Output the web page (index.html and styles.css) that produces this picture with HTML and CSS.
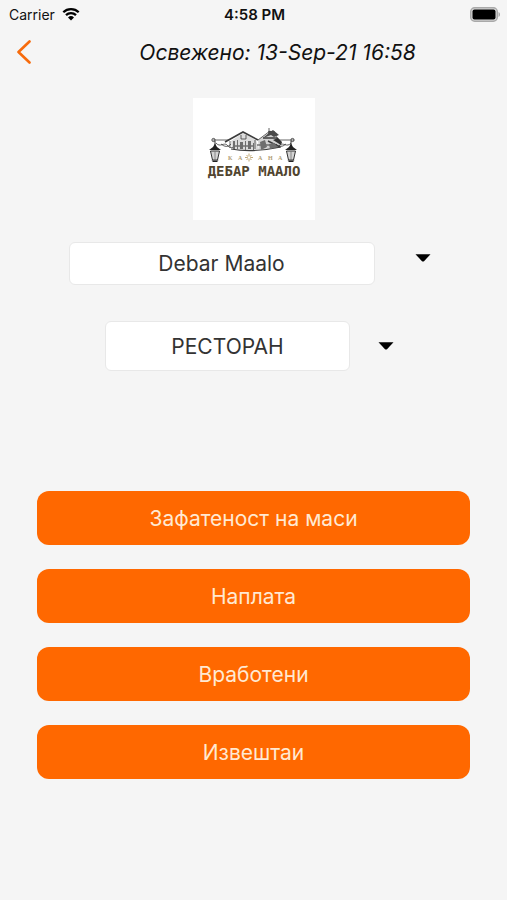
FILE: index.html
```html
<!DOCTYPE html>
<html lang="mk">
<head>
<meta charset="utf-8">
<meta name="viewport" content="width=device-width, initial-scale=1">
<title>Debar Maalo</title>
<link rel="stylesheet" href="styles.css">
</head>
<body>
<div class="status">
  <div class="carrier">
    <span>Carrier</span>
    <svg class="wifi" viewBox="0 0 18 14" aria-hidden="true">
      <path d="M1.3 5.2a11 11 0 0 1 15.4 0M4 8.2a7.2 7.2 0 0 1 10 0" fill="none" stroke="#000" stroke-width="2.3"/>
      <path d="M9 13.6 6 10.5a4.3 4.3 0 0 1 6 0z"/>
    </svg>
  </div>
  <time class="clock">4:58 PM</time>
  <svg class="battery" viewBox="0 0 30 15" aria-hidden="true">
    <rect x=".7" y=".7" width="26.6" height="13.6" rx="4" fill="#d8d8d8" stroke="#a9a9a9" stroke-width="1.4"/>
    <rect x="2.5" y="2.5" width="23" height="10" rx="2"/>
    <path d="M28.5 5v5c2-.8 2-4.200 0-5z" fill="#a9a9a9"/>
  </svg>
</div>
<header class="topbar">
  <button class="back" type="button" aria-label="Назад">
    <svg viewBox="0 0 16 24" aria-hidden="true"><path d="M13.500 1.500 2.500 12l11 10.500" fill="none" stroke="#f76b0c" stroke-width="2.600" stroke-linecap="round" stroke-linejoin="round"/></svg>
  </button>
  <h1 class="updated">Освежено: 13-Sep-21 16:58</h1>
</header>
<main>
  <svg class="logo" viewBox="0 0 122 122" role="img" aria-label="Кафана Дебар Маало">
    <path d="M38 43 50 35l13 7 3 9q-12 3-27 0z" fill="#dcdcdc"/>
    <path d="M65 42l12-8 7 8 5 6-10 3H66z" fill="#d2d2d2"/>
    <g fill="none" stroke="#3c3c3c" stroke-width=".8">
      <path d="M20 42h16M84 42h17M23 45c4 5 8-1 11 2s4 3 7 2M98 45c-4 5-8-1-11 2s-4 3-7 2"/>
      <path d="M28 46q6 5 10 0M93 46q-6 5-10 0"/>
      <path d="M32 44 50 34l15 8" stroke-width="1.600"/>
      <path d="M37 43v7M48 37v4h5v-4M62 42v9M65 42l8-6 4-3 5 4 4 5M76 30v4"/>
      <path d="M70 40h14l3 6M76 37v-3h5v3M75 43l12 6" stroke-width="1.400"/>
      <path d="M38 51q22 4 50-2M41 48h20M64 47h20" stroke-width="1.200"/>
    </g>
    <path d="M40 43h2v8h-2zM44 42h1v9h-1zM47 44h3v7h-3zM52 43h1v9h-1zM55 43h3v8h-3zM60 45h1v7h-1zM67 44l5-2 2 7-6 3zM76 46l5-1 4 4-8 2z" fill="#6e6e6e"/>
    <path d="m70 40 7-6 3-2 6 5-5 2-3-2z" fill="#4b4b4b"/>
    <path d="m80 42 5-2 4 4-1 3z" fill="#333"/>
    <g id="lamp">
      <circle cx="20.500" cy="42" r="1.600" fill="none" stroke="#444"/>
      <path d="M22 43v4" stroke="#333"/>
      <path d="m22 45.500 2 3.500 4 3H16l4-3z" fill="#222"/>
      <path d="m17.500 53 2 9h5l2-9z" fill="#d4d4d4" stroke="#333"/>
      <path d="M22 53v9" stroke="#777" stroke-width=".8"/>
      <path d="M18.500 62.500h7l-1.500 1.500h-4z" fill="#222"/>
    </g>
    <use href="#lamp" transform="matrix(-1 0 0 1 120 0)"/>
    <g class="logo-small">
      <text x="35" y="62">К</text><text x="45" y="62">А</text><text x="65" y="62">А</text><text x="75" y="62">Н</text><text x="85" y="62">А</text>
    </g>
    <path d="M56 55.500v8M52 59.500h8M53.500 57l5 5M58.500 57l-5 5" stroke="#c0a877" fill="none"/>
    <circle cx="56" cy="59.500" r="1.200" fill="#fff"/>
    <text class="logo-name" x="61" y="78">ДЕБАР МААЛО</text>
  </svg>
  <form class="filters">
    <div class="row row-place">
      <select id="place" aria-label="Локал"><option>Debar Maalo</option></select>
      <label class="caret" for="place"><svg viewBox="0 0 16 8" aria-hidden="true"><path d="M.5.300h15L9 7.200q-1 .8-2 0z"/></svg></label>
    </div>
    <div class="row row-unit">
      <select id="unit" aria-label="Единица"><option>РЕСТОРАН</option></select>
      <label class="caret" for="unit"><svg viewBox="0 0 16 8" aria-hidden="true"><path d="M.5.300h15L9 7.200q-1 .8-2 0z"/></svg></label>
    </div>
  </form>
  <nav class="menu">
    <button type="button">Зафатеност на маси</button>
    <button type="button">Наплата</button>
    <button type="button">Вработени</button>
    <button type="button">Извештаи</button>
  </nav>
</main>
</body>
</html>
```
FILE: styles.css
```css
* { box-sizing: border-box; }
body {
  margin: 0;
  background: #f5f5f5;
  color: #111;
  font-family: Inter, "Noto Sans", sans-serif;
}
button, select { font: inherit; }
.status {
  display: grid;
  grid-template-columns: 1fr auto 1fr;
  align-items: center;
  height: 28px;
  padding: 0 7px 0 9px;
  font-size: 14px;
}
.carrier { display: flex; align-items: center; gap: 7px; }
.wifi { width: 18px; height: 14px; }
.clock { font-size: 15px; font-weight: 600; }
.battery { width: 30px; height: 15px; justify-self: end; }
.topbar {
  display: grid;
  grid-template-columns: 48px 1fr;
  align-items: center;
  height: 48px;
}
.back {
  display: flex;
  justify-content: center;
  padding: 0;
  border: 0;
  background: none;
}
.back svg { width: 16px; height: 24px; }
.updated {
  margin: 0;
  text-align: center;
  font-size: 21px;
  font-weight: 400;
  font-style: italic;
}
main {
  display: flex;
  flex-direction: column;
  align-items: center;
  padding: 22px 37px;
}
.logo { width: 122px; height: 122px; background: #fff; }
.logo-small { font: bold 6px "Liberation Serif", serif; fill: #b09c74; }
.logo-name {
  font: bold 14px "DejaVu Sans Mono", monospace;
  fill: #51452f;
  text-anchor: middle;
}
.filters {
  display: flex;
  flex-direction: column;
  align-items: center;
  gap: 36px;
  width: 100%;
  padding-top: 22px;
}
.row { display: flex; justify-content: center; width: 100%; }
.row select {
  appearance: none;
  padding: 0 8px;
  border: 1px solid #e8e8e8;
  border-radius: 6px;
  background: #fff;
  color: #333;
  font-size: 21px;
  text-align: center;
  text-align-last: center;
}
.row-place { gap: 32px; }
.row-place select { width: 306px; height: 43px; }
.row-unit { gap: 20px; }
.row-unit select { width: 245px; height: 50px; }
.caret {
  display: flex;
  align-items: center;
  justify-content: center;
  width: 32px;
}
.row-place .caret { height: 32px; }
.caret svg { width: 16px; height: 8px; }
.menu {
  display: flex;
  flex-direction: column;
  gap: 24px;
  width: 100%;
  padding-top: 120px;
}
.menu button {
  height: 54px;
  padding: 0;
  border: 0;
  border-radius: 12px;
  background: #ff6800;
  color: #ffe9d2;
  font-size: 21px;
}
```
